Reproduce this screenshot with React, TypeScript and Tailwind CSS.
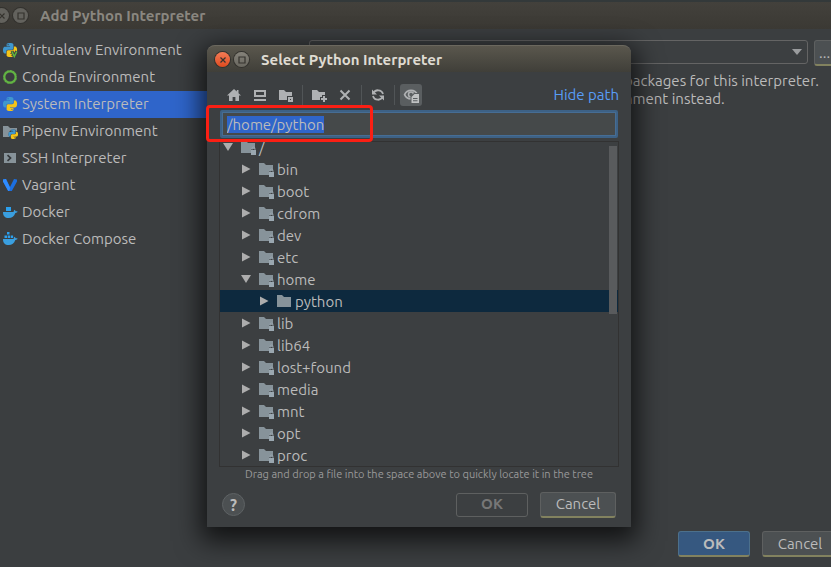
import { useEffect, useRef, type ReactNode } from "react";

const BLUE_SNAKE =
  "M14.25.18l.9.2.73.26.59.3.45.32.34.34.25.34.16.33.1.3.04.26.02.2-.01.13V8.5l-.05.63-.13.55-.21.46-.26.38-.3.31-.33.25-.35.19-.35.14-.33.1-.3.07-.26.04-.21.02H8.77l-.69.05-.59.14-.5.22-.41.27-.33.32-.27.35-.2.36-.15.37-.1.35-.07.32-.04.27-.02.21v3.06H3.17l-.21-.03-.28-.07-.32-.12-.35-.18-.36-.26-.36-.36-.35-.46-.32-.59-.28-.73-.21-.88-.14-1.05-.05-1.23.06-1.22.16-1.04.24-.87.32-.71.36-.57.4-.44.42-.33.42-.24.4-.16.36-.1.32-.05.24-.01h.16l.06.01h8.16v-.83H6.18l-.01-2.75-.02-.37.05-.34.11-.31.17-.28.25-.26.31-.23.38-.2.44-.18.51-.15.58-.12.64-.1.71-.06.77-.04.84-.02 1.27.05zm-6.3 1.98l-.23.33-.08.41.08.41.23.34.33.22.41.09.41-.09.33-.22.23-.34.08-.41-.08-.41-.23-.33-.33-.22-.41-.09-.41.09z";
const YELLOW_SNAKE =
  "M21.04 6.11l.28.06.32.12.35.18.36.27.36.35.35.47.32.59.28.73.21.88.14 1.04.05 1.23-.06 1.23-.16 1.04-.24.86-.32.71-.36.57-.4.45-.42.33-.42.24-.4.16-.36.09-.32.05-.24.02-.16-.01h-8.22v.82h5.84l.01 2.76.02.36-.05.34-.11.31-.17.29-.25.25-.31.24-.38.2-.44.17-.51.15-.58.13-.64.09-.71.07-.77.04-.84.01-1.27-.04-1.07-.14-.9-.2-.73-.25-.59-.3-.45-.33-.34-.34-.25-.34-.16-.33-.1-.3-.04-.25-.02-.2.01-.13v-5.34l.05-.64.13-.54.21-.46.26-.38.3-.32.33-.24.35-.2.35-.14.33-.1.3-.06.26-.04.21-.02.13-.01h5.84l.69-.05.59-.14.5-.21.41-.28.33-.32.27-.35.2-.36.15-.36.1-.35.07-.32.04-.28.02-.21V6.07h2.09l.14.01zm-6.47 14.25l-.23.33-.08.41.08.41.23.33.33.23.41.08.41-.08.33-.23.23-.33.08-.41-.08-.41-.23-.33-.33-.23-.41-.08-.41.08z";

function Svg({ children }: { children: ReactNode }) {
  return (
    <svg viewBox="0 0 16 16" className="size-4 shrink-0" aria-hidden="true">
      {children}
    </svg>
  );
}

function Snakes({ transform }: { transform: string }) {
  return (
    <g transform={transform}>
      <path d={BLUE_SNAKE} fill="#3f97cf" />
      <path d={YELLOW_SNAKE} fill="#f5c518" />
    </g>
  );
}

const FOLDER = "M1 3h5l2 2h7v9H1z";

const icons = {
  virtualenv: (
    <Svg>
      <Snakes transform="translate(1 1) scale(.585)" />
      <path d="M10 9l2.300 5.500L14.600 9" fill="none" stroke="#3c3f41" strokeWidth="3" />
      <path d="M10 9.500l2.300 5L14.800 9.500" fill="none" stroke="#5fb83d" strokeWidth="1.500" />
    </Svg>
  ),
  conda: (
    <Svg>
      <circle cx="8" cy="8" r="5.8" fill="none" stroke="#62b543" strokeWidth="2.400" />
      <circle cx="8" cy="8" r="6.800" fill="none" stroke="#3c3f41" strokeWidth=".6" strokeDasharray="1 2.4" />
    </Svg>
  ),
  system: (
    <Svg>
      <Snakes transform="translate(1 1) scale(.585)" />
    </Svg>
  ),
  pipenv: (
    <Svg>
      <path d={FOLDER} fill="#87939a" />
      <circle cx="11.300" cy="11.300" r="4.800" fill="#3c3f41" />
      <Snakes transform="translate(6.4 6.4) scale(.4)" />
    </Svg>
  ),
  ssh: (
    <Svg>
      <path d="M2 3h12v10H2z" fill="#87939a" />
      <path d="M5.5 5.2L8.5 8l-3 2.8" fill="none" stroke="#33373a" strokeWidth="1.7" />
    </Svg>
  ),
  vagrant: (
    <Svg>
      <path d="M1 2.5L4 2l4 8 4-8 3 .5v2L9.8 14H6.2L1 4.5z" fill="#1c6fe0" />
      <path d="M1 2.5L4 2l4.2 9-1 3h-1L1 4.5z" fill="#2f8cff" />
    </Svg>
  ),
  docker: (
    <Svg>
      <path d="M4 3h5v4H4z" fill="#2ba0ee" />
      <path d="M1 8h10.5c.2-1 .4-1.700 1-2.300.7.400 1 .9 1.100 1.600.8-.1 1.400 0 2 .3-.4 1-1.200 1.400-2.300 1.500C12.200 12.600 10 14 6.700 14 3 14 1 12 1 8z" fill="#3a9fe0" />
    </Svg>
  ),
  compose: (
    <Svg>
      <path d="M5 1h2.500v2.500H5zM2.500 4.500H5V7H2.500zM5.700 4.500h2.500V7H5.700zM8.900 4.500h2.200V7H8.900z" fill="#2ba0ee" />
      <path d="M1 8h10.500c.2-1 .4-1.700 1-2.300.7.400 1 .9 1.100 1.600.8-.1 1.400 0 2 .3-.4 1-1.200 1.400-2.300 1.500C12.200 12.600 10 14 6.700 14 3 14 1 12 1 8z" fill="#3a9fe0" />
    </Svg>
  ),
  home: (
    <Svg>
      <path d="M8 2L1 8.600h2V14h3.600v-4h2.800v4H13V8.600h2L12.500 6.200V3h-1.700v1.600z" fill="#afb1b3" />
    </Svg>
  ),
  desktop: (
    <Svg>
      <path d="M2 3h12v7H2zM4 5v3h8V5zM2 12h12v2H2z" fillRule="evenodd" fill="#afb1b3" />
    </Svg>
  ),
  project: (
    <Svg>
      <path d="M1 3h5l2 2h6v4H9v4H1z" fill="#afb1b3" />
      <path d="M10 10h5v5h-5zM12 12v1h1v-1z" fillRule="evenodd" fill="#afb1b3" />
    </Svg>
  ),
  newFolder: (
    <Svg>
      <path d="M1 3h5l2 2h6v3h-3v2H9v3H1z" fill="#afb1b3" />
      <path d="M12 9h2v2h2v2h-2v2h-2v-2h-2v-2h2z" fill="#afb1b3" />
    </Svg>
  ),
  remove: (
    <Svg>
      <path d="M3.500 3.500l9 9m0-9l-9 9" stroke="#afb1b3" strokeWidth="2" />
    </Svg>
  ),
  refresh: (
    <Svg>
      <path d="M3.200 6.500A5.200 5.200 0 0 1 13 7M12.800 9.500A5.200 5.200 0 0 1 3 9" fill="none" stroke="#afb1b3" strokeWidth="1.800" />
      <path d="M2 2.500V7.500h5zM14 13.500v-5H9z" fill="#afb1b3" />
    </Svg>
  ),
  showHidden: (
    <Svg>
      <path d="M1.600 7.600C4 1.900 12 1.900 14.400 7.600 12 13.300 4 13.300 1.600 7.600z" fill="none" stroke="#afb1b3" strokeWidth="1.700" />
      <circle cx="8" cy="7.400" r="2.500" fill="none" stroke="#afb1b3" strokeWidth="1.500" />
      <path d="M7.500 9L11 6h5v10H7.500z" fill="#5a5e60" />
      <path d="M8.500 10L11.500 7H16v9H8.500zM10 11v1h4.500v-1zM10 13.200v1h4.500v-1z" fillRule="evenodd" fill="#c0c2c3" />
    </Svg>
  ),
};

type IconName = keyof typeof icons;

const environments: { icon: IconName; label: string }[] = [
  { icon: "virtualenv", label: "Virtualenv Environment" },
  { icon: "conda", label: "Conda Environment" },
  { icon: "system", label: "System Interpreter" },
  { icon: "pipenv", label: "Pipenv Environment" },
  { icon: "ssh", label: "SSH Interpreter" },
  { icon: "vagrant", label: "Vagrant" },
  { icon: "docker", label: "Docker" },
  { icon: "compose", label: "Docker Compose" },
];

const tree = [
  { name: "/", level: 0, open: true },
  { name: "bin", level: 1 },
  { name: "boot", level: 1 },
  { name: "cdrom", level: 1 },
  { name: "dev", level: 1 },
  { name: "etc", level: 1 },
  { name: "home", level: 1, open: true },
  { name: "python", level: 2 },
  { name: "lib", level: 1 },
  { name: "lib64", level: 1 },
  { name: "lost+found", level: 1 },
  { name: "media", level: 1 },
  { name: "mnt", level: 1 },
  { name: "opt", level: 1 },
  { name: "proc", level: 1 },
];

const indents = ["pl-0.5", "pl-5", "pl-[38px]"];

function WindowButton({ kind, active }: { kind: "close" | "max"; active?: boolean }) {
  const colour = !active
    ? "bg-[#63625d]"
    : kind === "close"
      ? "bg-linear-to-b from-[#f47b55] to-[#df4a1c]"
      : "bg-linear-to-b from-[#85827a] to-[#69675f]";
  return (
    <button
      aria-label={kind === "close" ? "Close" : "Maximize"}
      className={`flex size-[15px] shrink-0 items-center justify-center rounded-full ring-1 ring-[#33322e] ${colour}`}
    >
      <svg viewBox="0 0 8 8" className="size-2" fill="none" stroke="#35332e" strokeWidth="1.200">
        {kind === "close" ? <path d="M1.500 1.500l5 5m0-5l-5 5" /> : <path d="M1 1h6v6H1z" />}
      </svg>
    </button>
  );
}

function Tool({ icon, label, pressed }: { icon: IconName; label: string; pressed?: boolean }) {
  return (
    <button
      aria-label={label}
      className={`flex h-[22px] items-center justify-center ${pressed ? "mx-0.5 w-[22px] rounded-[3px] bg-[#5a5e60]" : "w-[26px]"}`}
    >
      {icons[icon]}
    </button>
  );
}

function Separator() {
  return <span className="mx-[3px] h-5 w-px bg-[#515557]" />;
}

function TreeFolder({ locked }: { locked: boolean }) {
  return (
    <Svg>
      <path d={locked ? "M1 2h5l2 2h7v6h-4v4H1z" : "M1 2h5l2 2h7v10H1z"} fill="#87939a" />
      {locked && (
        <>
          <path d="M12 11V9.500a1.500 1.500 0 0 1 3 0V11" fill="none" stroke="#9aa7b0" strokeWidth=".8" />
          <path d="M11 11h5v5h-5z" fill="#9aa7b0" />
        </>
      )}
    </Svg>
  );
}

function SelectDialog() {
  const path = useRef<HTMLInputElement>(null);
  useEffect(() => {
    path.current?.focus();
    path.current?.select();
  }, []);

  return (
    <section
      role="dialog"
      aria-label="Select Python Interpreter"
      className="absolute top-[45px] left-[207px] w-[424px] rounded-t-lg bg-[#3c3f41] shadow-[0_8px_26px_6px_rgba(0,0,0,0.7)]"
    >
      <header className="flex h-[27px] items-center gap-1 rounded-t-lg border-t border-[#6b685e] bg-linear-to-b from-[#5a574d] to-[#403f39] pt-px pl-2">
        <WindowButton kind="close" active />
        <WindowButton kind="max" active />
        <h2 className="ml-2 text-[15px] font-bold text-[#dfdbd2]">Select Python Interpreter</h2>
      </header>
      <div className="px-3 pt-3">
        <div className="flex items-center px-0.5">
          <Tool icon="home" label="Home directory" />
          <Tool icon="desktop" label="Desktop directory" />
          <Tool icon="project" label="Project directory" />
          <Separator />
          <Tool icon="newFolder" label="New folder" />
          <Tool icon="remove" label="Delete" />
          <Separator />
          <Tool icon="refresh" label="Refresh" />
          <Separator />
          <Tool icon="showHidden" label="Show hidden files" pressed />
          <a href="#path" className="-mr-0.5 ml-auto text-[#589df6]">
            Hide path
          </a>
        </div>
        <input
          ref={path}
          id="path"
          aria-label="Path"
          defaultValue="/home/python"
          className="mx-px mt-1 block h-7 w-[calc(100%-2px)] rounded-[2px] border-2 border-[#3d6185] bg-[#45494a] px-[5px] text-[#bbbbbb] ring-1 ring-[#466d94] outline-none ring-inset selection:bg-[#2f65ca] selection:text-[#bbbbbb]"
        />
        <div className="relative mt-[3px] border border-[#323232]">
          <ul role="tree" className="-mt-1.5">
            {tree.map(({ name, level, open }) => (
              <li
                key={name}
                role="treeitem"
                aria-selected={name === "python"}
                className={`flex h-[22px] items-center ${indents[level]} ${name === "python" ? "bg-[#0d293e]" : ""}`}
              >
                <svg viewBox="0 0 12 12" className="mr-1.5 size-3" fill="#adadad" aria-hidden="true">
                  {open ? <path d="M1 2h10L6 10z" /> : <path d="M2 1.500v9L10.500 6z" />}
                </svg>
                <TreeFolder locked={name !== "python"} />
                <span className="pt-0.5 pl-[3px]">{name}</span>
              </li>
            ))}
          </ul>
          <span className="absolute top-1 right-px h-[168px] w-2 bg-[#595b5d]" />
        </div>
        <p className="text-center text-[11px] leading-[15px] text-[#999999]">
          Drag and drop a file into the space above to quickly locate it in the tree
        </p>
      </div>
      <footer className="flex h-[45px] items-center gap-3 px-[15px]">
        <button
          aria-label="Help"
          className="mr-auto flex size-[23px] items-center justify-center rounded-full border border-[#5e6264] bg-[#4c5052] text-base font-bold text-[#bbbbbb]"
        >
          ?
        </button>
        <button disabled className="h-6 w-[72px] rounded-[3px] border border-[#5e6060] pb-0.5 font-bold text-[#777777]">
          OK
        </button>
        <button className="h-[26px] w-[76px] rounded-[3px] border border-b-2 border-[#5e6060] border-b-[#82825f] bg-[#4c5052]">
          Cancel
        </button>
      </footer>
    </section>
  );
}

export default function App() {
  return (
    <main className="relative h-screen overflow-hidden bg-[#3b3e40] font-['Ubuntu','Noto_Sans',sans-serif] text-[15px] leading-5 text-[#bbbbbb]">
      <div className="flex h-full w-[calc(100%+7px)] flex-col">
        <header className="flex h-[29px] shrink-0 items-center gap-1 border-t-2 border-[#33393a] bg-linear-to-b from-[#43413c] to-[#3b3934]">
          <span className="-ml-1.5 flex gap-1">
            <WindowButton kind="close" />
            <WindowButton kind="max" />
          </span>
          <h1 className="ml-2 text-[15px] font-bold text-[#8a8780]">Add Python Interpreter</h1>
        </header>
        <div className="flex min-h-0 flex-1">
          <nav className="w-[300px] shrink-0 pt-2">
            <ul>
              {environments.map(({ icon, label }) => (
                <li key={icon}>
                  <button
                    className={`flex h-[27px] w-full items-center gap-1 pb-0.5 pl-0.5 ${icon === "system" ? "bg-[#2f65ca]" : ""}`}
                  >
                    {icons[icon]}
                    {label}
                  </button>
                </li>
              ))}
            </ul>
          </nav>
          <div className="flex flex-1 flex-col pt-[11px] pl-[9px]">
            <div className="flex items-start gap-1.5">
              <div className="relative flex-1">
                <select
                  aria-label="Interpreter"
                  className="block h-6 w-full appearance-none rounded-[3px] border border-[#646464] bg-[#3c3f41]"
                />
                <svg viewBox="0 0 10 6" className="pointer-events-none absolute top-[9px] right-1.5 h-1.5 w-2.5" fill="#9a9c9e">
                  <path d="M0 0h10L5 6z" />
                </svg>
              </div>
              <button
                aria-label="Browse"
                className="h-[26px] w-6 rounded-[3px] border border-b-2 border-[#5e6060] border-b-[#82825f] bg-[#4c5052] pl-1 text-left"
              >
                ...
              </button>
            </div>
            <p className="mt-1.5 pl-[315px] leading-[18px] whitespace-nowrap">
              packages for this interpreter.
              <br />
              nment instead.
            </p>
          </div>
        </div>
        <footer className="flex h-9 shrink-0 items-start justify-end gap-3">
          <button className="h-[26px] w-[72px] rounded-[3px] border border-b-2 border-[#4c708c] border-b-[#82825f] bg-[#365880] font-bold">
            OK
          </button>
          <button className="h-[26px] w-[76px] rounded-[3px] border border-b-2 border-[#5e6060] border-b-[#82825f] bg-[#4c5052]">
            Cancel
          </button>
        </footer>
      </div>
      <SelectDialog />
      <span className="pointer-events-none absolute top-[105px] left-[206px] h-[37px] w-[167px] rounded-[4px] border-3 border-[#fb1f14]" />
    </main>
  );
}
